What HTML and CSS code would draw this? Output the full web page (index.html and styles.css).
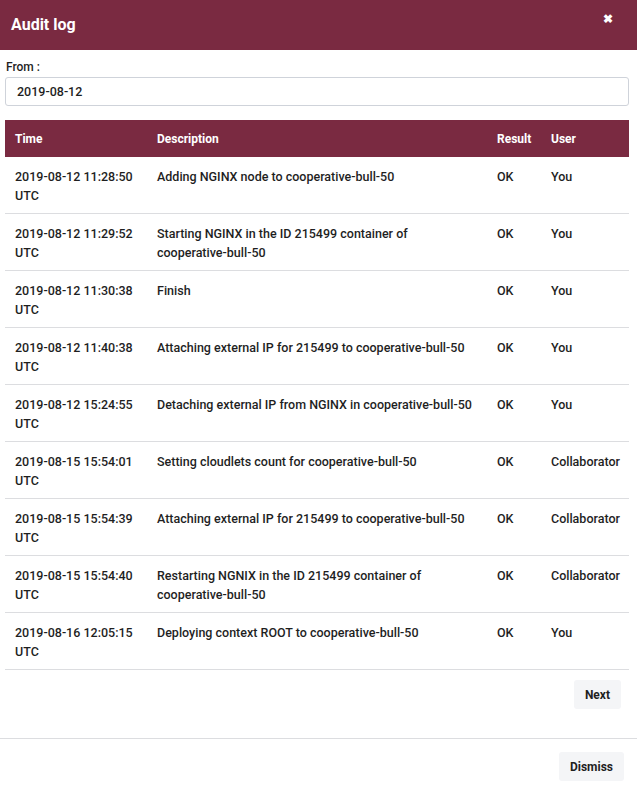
FILE: index.html
```html
<!DOCTYPE html>
<html>
<head>
<meta charset="utf-8">
<link rel="stylesheet" href="styles.css">
</head>
<body>
<div class="modal">
  <div class="modal-header">
    <h1 class="title">Audit log</h1>
    <span class="close">&#x2716;</span>
  </div>
  <div class="modal-body">
    <label class="from-label">From :</label>
    <div class="input">2019-08-12</div>
    <table class="log">
      <colgroup>
        <col class="c-time"><col class="c-desc"><col class="c-res"><col class="c-user">
      </colgroup>
      <thead>
        <tr><th>Time</th><th>Description</th><th>Result</th><th>User</th></tr>
      </thead>
      <tbody>
        <tr><td>2019-08-12 11:28:50 UTC</td><td>Adding NGINX node to cooperative-bull-50</td><td>OK</td><td>You</td></tr>
        <tr><td>2019-08-12 11:29:52 UTC</td><td>Starting NGINX in the ID 215499 container of cooperative-bull-50</td><td>OK</td><td>You</td></tr>
        <tr><td>2019-08-12 11:30:38 UTC</td><td>Finish</td><td>OK</td><td>You</td></tr>
        <tr><td>2019-08-12 11:40:38 UTC</td><td>Attaching external IP for 215499 to cooperative-bull-50</td><td>OK</td><td>You</td></tr>
        <tr><td>2019-08-12 15:24:55 UTC</td><td>Detaching external IP from NGINX in cooperative-bull-50</td><td>OK</td><td>You</td></tr>
        <tr><td>2019-08-15 15:54:01 UTC</td><td>Setting cloudlets count for cooperative-bull-50</td><td>OK</td><td>Collaborator</td></tr>
        <tr><td>2019-08-15 15:54:39 UTC</td><td>Attaching external IP for 215499 to cooperative-bull-50</td><td>OK</td><td>Collaborator</td></tr>
        <tr><td>2019-08-15 15:54:40 UTC</td><td>Restarting NGNIX in the ID 215499 container of cooperative-bull-50</td><td>OK</td><td>Collaborator</td></tr>
        <tr><td>2019-08-16 12:05:15 UTC</td><td>Deploying context ROOT to cooperative-bull-50</td><td>OK</td><td>You</td></tr>
      </tbody>
    </table>
    <div class="pager">
      <button class="btn">Next</button>
    </div>
  </div>
  <div class="modal-footer">
    <button class="btn">Dismiss</button>
  </div>
</div>
</body>
</html>
```
FILE: styles.css
```css
* { box-sizing: border-box; }
html, body { margin: 0; padding: 0; background: #fff; }
body {
  font-family: Roboto, "Noto Sans", sans-serif;
  font-size: 12.5px;
  font-weight: 500;
  color: #1f1f1f;
  width: 637px;
}
.modal-header {
  background: #7a2a41;
  height: 50px;
  display: flex;
  align-items: flex-start;
  justify-content: space-between;
  padding: 0 24px 0 11px;
}
.title {
  margin: 0;
  color: #fff;
  font-size: 16px;
  font-weight: 700;
  line-height: 50px;
}
.close {
  color: #fff;
  font-size: 12px;
  line-height: 12px;
  margin-top: 13px;
  font-weight: 700;
}
.modal-body {
  padding: 10px 8px 0 5px;
}
.from-label {
  display: block;
  font-size: 12px;
  line-height: 14px;
  padding-left: 1px;
  margin-bottom: 3px;
}
.input {
  height: 29px;
  border: 1px solid #cfd3da;
  border-radius: 3px;
  padding: 0 11px;
  line-height: 27px;
  font-size: 12.5px;
}
.log {
  margin-top: 14px;
  width: 624px;
  border-collapse: collapse;
  table-layout: fixed;
}
.c-time { width: 142px; }
.c-desc { width: 340px; }
.c-res { width: 54px; }
.c-user { width: 88px; }
.log th {
  background: #7a2a41;
  color: #fff;
  text-align: left;
  font-weight: 700;
  height: 37px;
  padding: 0 10px;
  font-size: 12px;
}
.log td {
  vertical-align: top;
  padding: 10px 10px 8px;
  line-height: 19px;
  border-bottom: 1px solid #dcdde0;
  height: 56px;
}
.log td:nth-child(3), .log td:nth-child(4), .log th:nth-child(3), .log th:nth-child(4) { padding-left: 10px; padding-right: 0; }
.pager {
  display: flex;
  justify-content: flex-end;
  padding: 10px 8px 29px 0;
}
.btn {
  font-family: inherit;
  font-size: 12px;
  font-weight: 700;
  color: #1f1f1f;
  background: #f4f5f7;
  border: none;
  border-radius: 3px;
  height: 29px;
  padding: 0 11px;
}
.modal-footer {
  border-top: 1px solid #dcdde0;
  display: flex;
  justify-content: flex-end;
  padding: 13px 13px 0 0;
}
```
